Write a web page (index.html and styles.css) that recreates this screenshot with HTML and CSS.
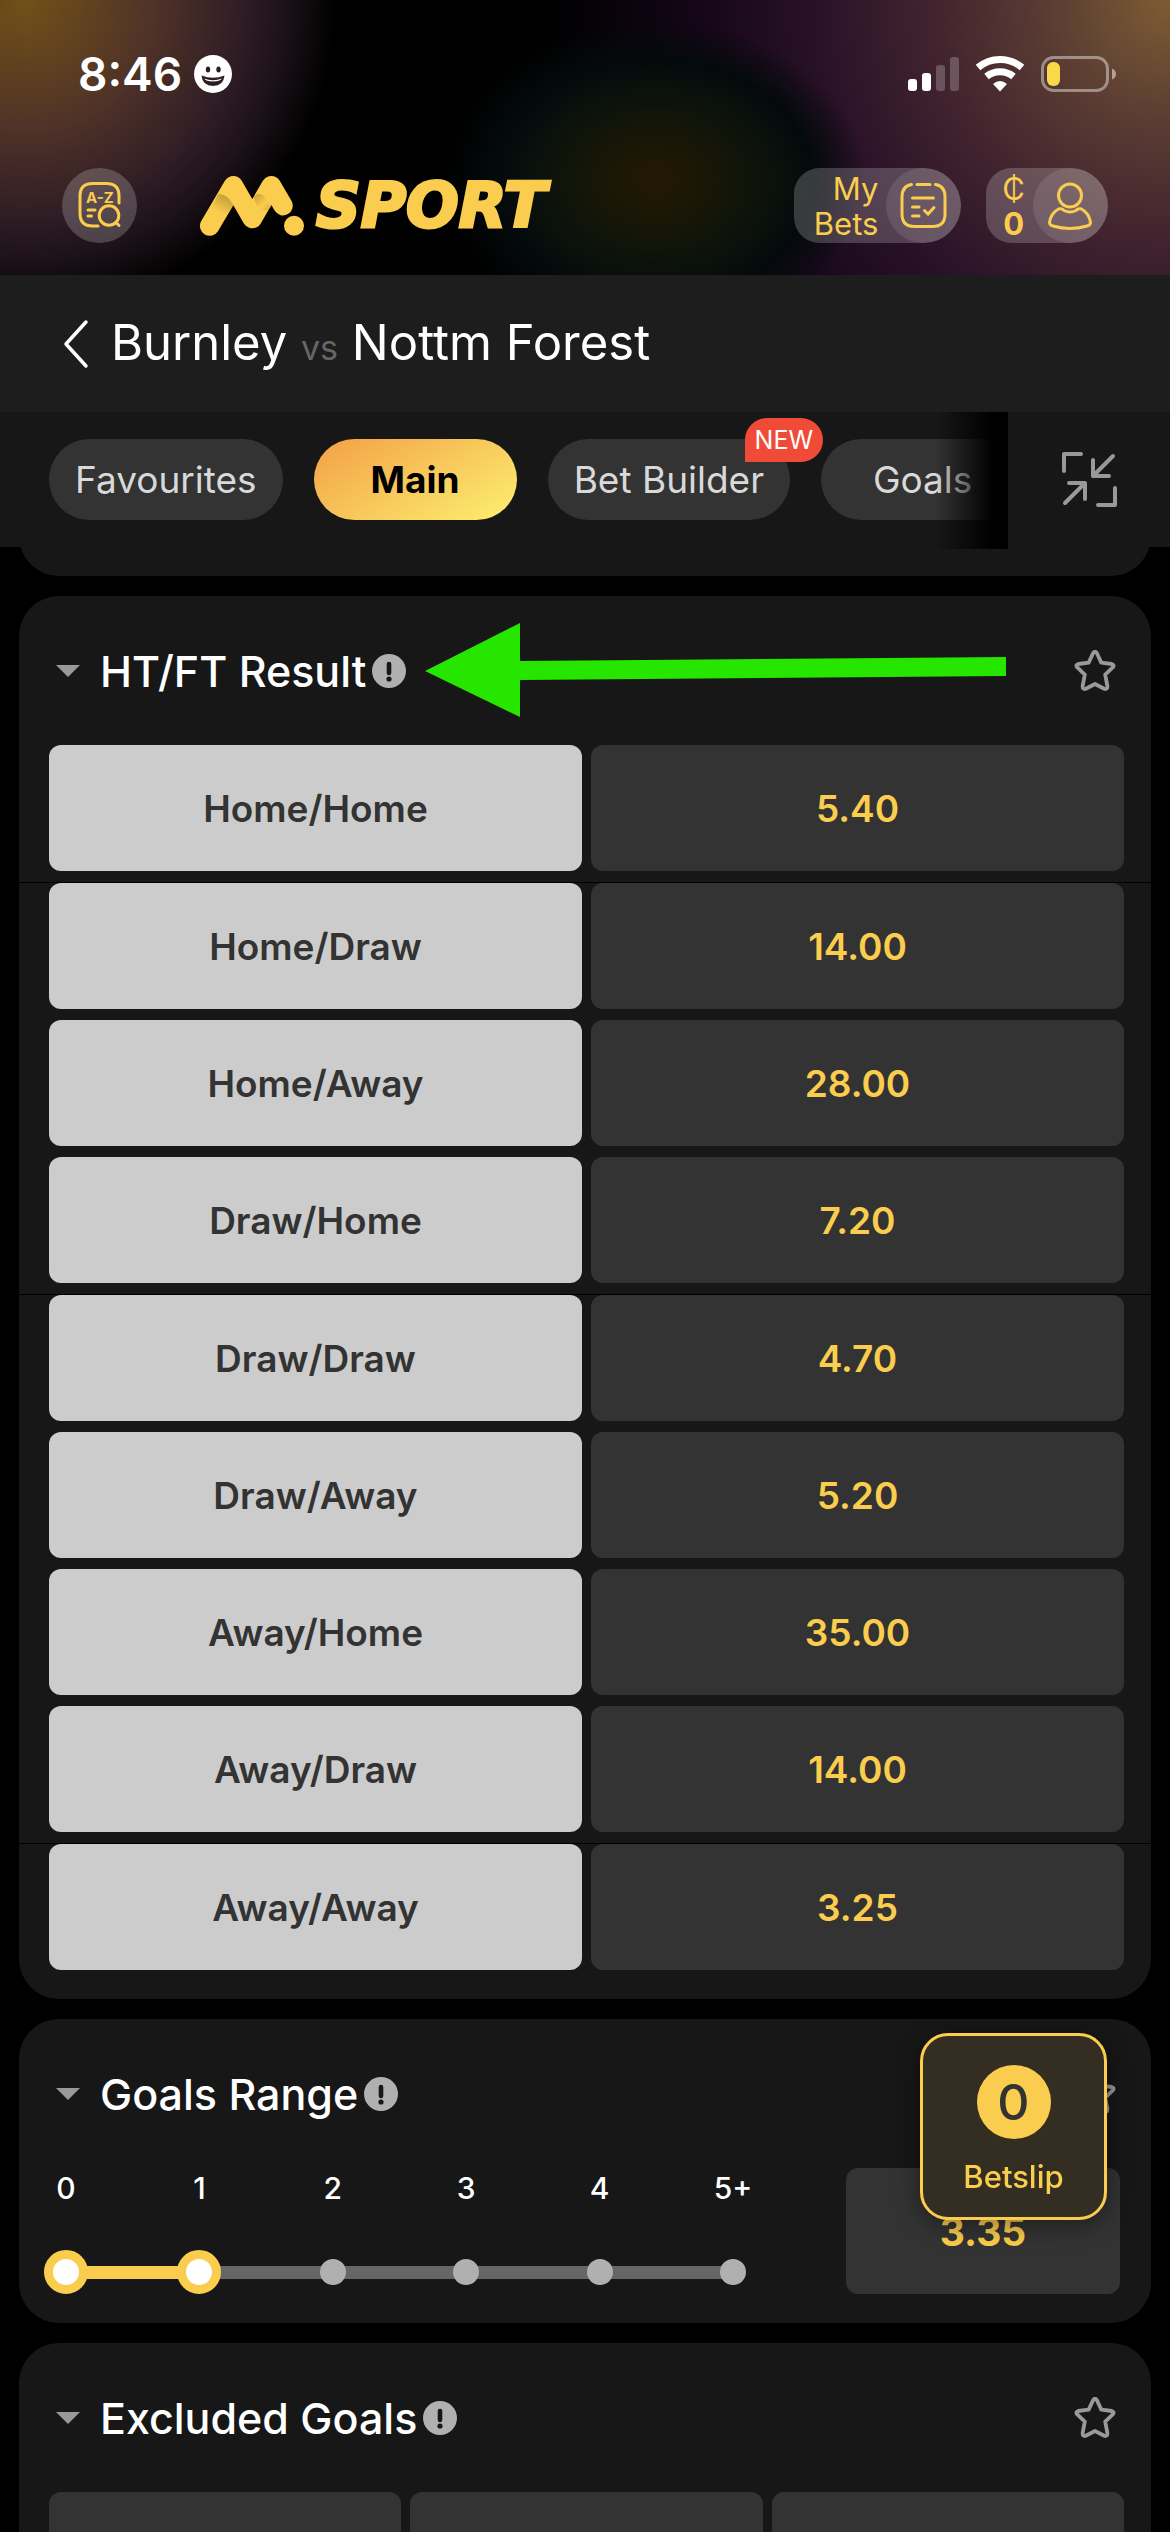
FILE: index.html
```html
<!DOCTYPE html>
<html lang="en">
<head>
    <meta charset="UTF-8">
    <meta name="viewport" content="width=device-width, initial-scale=1.0">
    <title>Burnley vs Nottm Forest</title>
    <link rel="stylesheet" href="styles.css">
</head>
<body>
    <!-- shared icons -->
    <svg class="sprite" width="0" height="0" aria-hidden="true">
        <symbol id="star" viewBox="0 0 42 42">
            <path d="M19.3 2.8Q21 .4 22.7 2.8L27.3 12.6 37.8 14Q40.6 14.8 39 17.2L31.2 24.6 33.4 36.2Q33.4 39.8 30.2 38.8L21 34 11.8 38.8Q8.6 39.8 8.6 36.2L10.8 24.6 3 17.2Q1.4 14.8 4.2 14L14.7 12.6Z" fill="none" stroke="#999" stroke-width="3.8" stroke-linejoin="round"/>
        </symbol>
        <symbol id="info" viewBox="0 0 34 34">
            <circle cx="17" cy="17" r="17" fill="#b0b0b0"/>
            <path d="M17 10V19" stroke="#171717" stroke-width="4.6" stroke-linecap="round"/>
            <circle cx="17" cy="25" r="2.6" fill="#171717"/>
        </symbol>
        <symbol id="caret" viewBox="0 0 24 12">
            <path d="M0 0H24L12 12Z" fill="#999"/>
        </symbol>
    </svg>

    <div class="app">
        <header class="top">
            <div class="status">
                <div class="clock">
                    <span>8:46</span>
                    <svg width="38" height="38" viewBox="0 0 38 38" aria-hidden="true">
                        <circle cx="19" cy="19" r="19" fill="#fff"/>
                        <ellipse cx="14" cy="14.5" rx="2.2" ry="3" fill="#2d1d20"/>
                        <ellipse cx="24.5" cy="14.5" rx="2.2" ry="3" fill="#2d1d20"/>
                        <path d="M7.5 20.5Q19 25 30.5 20.5Q29.5 31 19 31Q8.5 31 7.5 20.5Z" fill="#2d1d20"/>
                        <path d="M10 23.5Q19 27 28 23.5Q26 26.5 19 26.5Q12 26.5 10 23.5Z" fill="#fff"/>
                    </svg>
                </div>
                <svg width="210" height="38" viewBox="0 0 210 38" aria-hidden="true">
                    <rect x="2" y="24" width="9" height="12" rx="3" fill="#fff"/>
                    <rect x="16" y="18" width="9" height="18" rx="3" fill="#fff"/>
                    <rect x="30" y="10" width="9" height="26" rx="3" fill="#fff" opacity=".22"/>
                    <rect x="44" y="2" width="9" height="34" rx="3" fill="#fff" opacity=".22"/>
                    <path d="M72 12.5A34 34 0 0 1 116 12.5" fill="none" stroke="#fff" stroke-width="7"/>
                    <path d="M80.5 21.5A21.5 21.5 0 0 1 107.5 21.5" fill="none" stroke="#fff" stroke-width="7"/>
                    <path d="M87 29Q94 23 101 29L94 36.5Z" fill="#fff"/>
                    <rect x="136.5" y="2.5" width="65" height="33" rx="11" fill="none" stroke="#fff" stroke-opacity=".42" stroke-width="3"/>
                    <rect x="141" y="7" width="13" height="24" rx="6" fill="#f9d949"/>
                    <path d="M206 13.5Q210 15 210 19T206 24.5Z" fill="#fff" opacity=".5"/>
                </svg>
            </div>

            <div class="nav">
                <button class="round-btn" type="button" aria-label="A-Z search">
                    <svg width="75" height="75" viewBox="0 0 75 75" fill="none" stroke="#fbcd4e" stroke-width="3" stroke-linecap="round">
                        <path d="M57 35V28Q57 15.5 44.5 15.5H30.5Q18 15.5 18 28V45.5Q18 58 30.5 58H36"/>
                        <circle cx="47" cy="47.5" r="9.8"/>
                        <path d="M54 54.5L57 57.5M26 42H33M26 48H29.5"/>
                        <text class="az" x="24" y="35" fill="#fbcd4e" stroke="none">A-Z</text>
                    </svg>
                </button>
                <a class="logo" href="#">
                    <svg width="105" height="62" viewBox="0 0 105 62" aria-hidden="true">
                        <defs>
                            <linearGradient id="foldLeft" x1="30" y1="19" x2="17" y2="42" gradientUnits="userSpaceOnUse">
                                <stop offset="0" stop-color="#b89433"/>
                                <stop offset=".8" stop-color="#fbcd4e"/>
                            </linearGradient>
                            <linearGradient id="foldRight" x1="57" y1="20" x2="70" y2="34" gradientUnits="userSpaceOnUse">
                                <stop offset="0" stop-color="#cfa73d"/>
                                <stop offset=".6" stop-color="#fbcd4e"/>
                                <stop offset="1" stop-color="#d9af43"/>
                            </linearGradient>
                        </defs>
                        <path d="M9.7 51L33.3 10.7 52.3 43.5 71.3 10.7 83 30.7" fill="none" stroke="#fbcd4e" stroke-width="19.5" stroke-linecap="round" stroke-linejoin="round"/>
                        <path d="M18 19.3Q27 18 33.3 30L24 45 10 36Z" fill="url(#foldLeft)"/>
                        <path d="M54 22Q58 16 64 21L71 31Q68 37 61 34Q55 30 54 22Z" fill="url(#foldRight)"/>
                        <circle cx="94" cy="50.7" r="10" fill="#fbcd4e"/>
                    </svg>
                    <span class="logo-text">SPORT</span>
                </a>
                <button class="pill bets" type="button">
                    <span class="pill-text">My<br>Bets</span>
                    <svg class="pill-icon" width="75" height="75" viewBox="0 0 75 75" fill="none" stroke="#fbcd4e" stroke-width="3" stroke-linecap="round" aria-hidden="true">
                        <path d="M25.5 16.5Q16 18 16 29V46Q16 58.5 28.5 58.5H46.5Q59 58.5 59 46V29Q59 18 49.5 16.5M31 16.5H44"/>
                        <path d="M26.5 30H47.5M26.5 39H33M26.5 48H33M38.5 42.5L42 46 48 39.5"/>
                    </svg>
                </button>
                <button class="pill account" type="button" aria-label="Account, balance 0">
                    <span class="pill-text">₵<br><b>0</b></span>
                    <svg class="pill-icon" width="75" height="75" viewBox="0 0 75 75" fill="none" stroke="#fbcd4e" stroke-width="3" stroke-linejoin="round" aria-hidden="true">
                        <circle cx="37" cy="27.5" r="11.5"/>
                        <path d="M25.5 41Q29 40 31 42.5Q37 45.5 43 42.5Q45 40 48.5 41Q56 45 57.5 54.5Q57.5 57 54 58Q37 63 20 58Q16.5 57 16.5 54.5Q18 45 25.5 41Z"/>
                    </svg>
                </button>
            </div>
        </header>

        <div class="match">
            <a class="back" href="#" aria-label="Back">
                <svg width="26" height="54" viewBox="0 0 26 54" fill="none" stroke="#fff" stroke-width="3.5" stroke-linecap="round" stroke-linejoin="round">
                    <path d="M23 5L3 27 23 49"/>
                </svg>
            </a>
            <h1>Burnley <small>vs</small> Nottm Forest</h1>
        </div>

        <nav class="tabs">
            <div class="tab-list">
                <button class="tab" type="button">Favourites</button>
                <button class="tab active" type="button">Main</button>
                <button class="tab" type="button">Bet Builder<span class="badge">NEW</span></button>
                <button class="tab" type="button">Goals</button>
            </div>
            <button class="collapse" type="button" aria-label="Collapse all">
                <svg width="56" height="56" viewBox="0 0 56 56" fill="none" stroke="#999" stroke-width="4" stroke-linecap="round" stroke-linejoin="round">
                    <path d="M3 19V2H20M37 53H54V36"/>
                    <path d="M52 4L32 24M32 8V24H48"/>
                    <path d="M4 51L24 31M8 31H24V47"/>
                </svg>
            </button>
        </nav>

        <main>
            <div class="card-stub"></div>

            <section class="card">
                <div class="card-head">
                    <svg class="caret" aria-hidden="true"><use href="#caret"/></svg>
                    <h2>HT/FT Result</h2>
                    <svg class="info" aria-hidden="true"><use href="#info"/></svg>
                    <button class="fav" type="button" aria-label="Add HT/FT Result to favourites"><svg><use href="#star"/></svg></button>
                    <svg class="arrow" width="582" height="94" viewBox="0 0 582 94" aria-hidden="true">
                        <path d="M0 48L95 0V38L581 34V53L95 57V94Z" fill="#26e600"/>
                    </svg>
                </div>
                <div class="group">
                    <div class="row"><span class="outcome">Home/Home</span><button class="odds" type="button">5.40</button></div>
                </div>
                <div class="group">
                    <div class="row"><span class="outcome">Home/Draw</span><button class="odds" type="button">14.00</button></div>
                    <div class="row"><span class="outcome">Home/Away</span><button class="odds" type="button">28.00</button></div>
                    <div class="row"><span class="outcome">Draw/Home</span><button class="odds" type="button">7.20</button></div>
                </div>
                <div class="group">
                    <div class="row"><span class="outcome">Draw/Draw</span><button class="odds" type="button">4.70</button></div>
                    <div class="row"><span class="outcome">Draw/Away</span><button class="odds" type="button">5.20</button></div>
                    <div class="row"><span class="outcome">Away/Home</span><button class="odds" type="button">35.00</button></div>
                    <div class="row"><span class="outcome">Away/Draw</span><button class="odds" type="button">14.00</button></div>
                </div>
                <div class="group">
                    <div class="row"><span class="outcome">Away/Away</span><button class="odds" type="button">3.25</button></div>
                </div>
            </section>

            <section class="card">
                <div class="card-head">
                    <svg class="caret" aria-hidden="true"><use href="#caret"/></svg>
                    <h2>Goals Range</h2>
                    <svg class="info" aria-hidden="true"><use href="#info"/></svg>
                    <button class="fav" type="button" aria-label="Add Goals Range to favourites"><svg><use href="#star"/></svg></button>
                </div>
                <div class="goals-range">
                    <div class="range">
                        <div class="range-labels">
                            <span>0</span><span>1</span><span>2</span><span>3</span><span>4</span><span>5+</span>
                        </div>
                        <div class="range-slider">
                            <div class="track"><div class="fill" style="width: 20%"></div></div>
                            <div class="dots"><i></i><i></i><i></i><i></i><i></i><i></i></div>
                            <input type="range" min="0" max="5" value="0" aria-label="Minimum goals">
                            <input type="range" min="0" max="5" value="1" aria-label="Maximum goals">
                        </div>
                    </div>
                    <button class="odds range-odds" type="button">3.35</button>
                </div>
            </section>

            <section class="card">
                <div class="card-head">
                    <svg class="caret" aria-hidden="true"><use href="#caret"/></svg>
                    <h2>Excluded Goals</h2>
                    <svg class="info" aria-hidden="true"><use href="#info"/></svg>
                    <button class="fav" type="button" aria-label="Add Excluded Goals to favourites"><svg><use href="#star"/></svg></button>
                </div>
                <div class="three">
                    <button class="odds" type="button" aria-label="Option 1"></button>
                    <button class="odds" type="button" aria-label="Option 2"></button>
                    <button class="odds" type="button" aria-label="Option 3"></button>
                </div>
            </section>
        </main>

        <button class="betslip" type="button">
            <span class="count">0</span>
            <span>Betslip</span>
        </button>
    </div>
</body>
</html>
```

FILE: styles.css
```css
* {
    margin: 0;
    padding: 0;
    box-sizing: border-box;
}

body {
    font-family: Inter, "Liberation Sans", sans-serif;
    background: #000;
    color: #fff;
}

button {
    border: none;
    background: none;
    color: inherit;
    font: inherit;
    cursor: pointer;
}

a {
    color: inherit;
    text-decoration: none;
}

svg {
    display: block;
    flex-shrink: 0;
}

.sprite {
    position: absolute;
}

.app {
    height: 100vh;
    overflow: hidden;
}

/* header */
.top {
    padding: 54px 54px 32px 62px;
    background:
        radial-gradient(circle at 25px 0, #6f5118 0, #5f4020 70px, #4f3228 130px, #301d25 215px, #1c1218 260px, transparent 312px),
        radial-gradient(ellipse 210px 160px at 56% 180px, #241803 0, #191706 25%, #0d130b 50%, #040a0c 75%, transparent 100%),
        radial-gradient(circle at 100% 0, #7d5c32 0, #5b3d33 120px, #43252f 230px, #2a1228 350px, #150618 470px, transparent 620px);
}

.status {
    display: flex;
    justify-content: space-between;
    align-items: center;
    height: 40px;
}

.clock {
    display: flex;
    align-items: center;
    gap: 12px;
    padding-left: 16px;
    font-size: 46px;
    line-height: 40px;
    font-weight: 600;
}

.nav {
    display: flex;
    align-items: center;
    height: 75px;
    margin-top: 74px;
    padding-right: 8px;
}

.round-btn {
    height: 75px;
    border-radius: 50%;
    background: rgba(255, 255, 255, 0.2);
}

.az {
    font: 700 15px Inter, sans-serif;
}

.logo {
    display: flex;
    align-items: center;
    gap: 11px;
    margin-left: 63px;
    margin-right: auto;
    color: #fbcd4e;
}

.logo-text {
    font-family: "DejaVu Sans", sans-serif;
    font-size: 62px;
    line-height: 62px;
    font-weight: 700;
    font-style: italic;
    -webkit-text-stroke: 3px #fbcd4e;
}

.pill {
    display: flex;
    align-items: center;
    gap: 8px;
    border-radius: 26px 38px 38px 26px;
    background: rgba(255, 255, 255, 0.2);
    color: #fbcd4e;
    font-size: 31px;
    line-height: 35px;
}

.pill-icon {
    border-radius: 50%;
    background: rgba(255, 255, 255, 0.1);
}

.bets {
    padding-left: 20px;
    text-align: right;
}

.account {
    margin-left: 25px;
    padding-left: 16px;
}

/* match title */
.match {
    display: flex;
    align-items: center;
    gap: 22px;
    height: 137px;
    padding-left: 63px;
    background: #1d1d1d;
}

h1 {
    padding-top: 4px;
    font-size: 49px;
    line-height: 60px;
    font-weight: 400;
}

h1 small {
    font-size: 34px;
    color: #666;
}

/* tabs */
.tabs {
    position: relative;
    z-index: 1;
    display: flex;
    height: 135px;
    background: #171717;
}

.tab-list {
    display: flex;
    align-items: center;
    gap: 31px;
    flex: 1;
    min-width: 0;
    padding-left: 49px;
    overflow: hidden;
}

/* fade over the cut-off tab */
.tabs::after {
    content: "";
    position: absolute;
    top: 0;
    right: 162px;
    width: 72px;
    height: 137px;
    background: linear-gradient(to right, transparent, #000 80%);
}

.tab {
    position: relative;
    flex-shrink: 0;
    min-width: 203px;
    height: 81px;
    padding: 0 26px;
    border-radius: 41px;
    background: #333;
    color: #d9d9d9;
    font-size: 37px;
}

.tab.active {
    background: linear-gradient(150deg, #f4a84a 10%, #fcec6e 95%);
    color: #000;
    font-weight: 700;
}

.badge {
    position: absolute;
    top: -21px;
    right: -33px;
    padding: 0 10px;
    border-radius: 22px 22px 22px 0;
    background: #f04b37;
    color: #fff;
    font-size: 25px;
    line-height: 44px;
}

.collapse {
    display: flex;
    align-items: center;
    justify-content: center;
    width: 162px;
}

/* market cards */
.card-stub {
    height: 69px;
    margin: -40px 19px 20px;
    border-radius: 0 0 40px 40px;
    background: #171717;
}

.card {
    margin: 0 19px 20px;
    padding-bottom: 29px;
    border-radius: 40px;
    background: #171717;
}

.card-head {
    position: relative;
    display: flex;
    align-items: center;
    height: 149px;
    padding: 0 35px 0 37px;
}

.caret {
    width: 24px;
    height: 12px;
}

h2 {
    margin-left: 20px;
    margin-right: 6px;
    font-size: 43px;
    line-height: 52px;
    font-weight: 500;
}

.info {
    width: 34px;
    height: 34px;
}

.fav {
    margin-left: auto;
}

.fav svg {
    width: 42px;
    height: 42px;
}

.arrow {
    position: absolute;
    top: 27px;
    left: 406px;
}

.group {
    display: grid;
    gap: 11px;
    padding: 0 27px 0 30px;
}

.group + .group {
    margin-top: 11px;
    border-top: 1px solid #000;
}

.row {
    display: grid;
    grid-template-columns: 1fr 1fr;
    gap: 9px;
}

.outcome,
.odds {
    display: flex;
    align-items: center;
    justify-content: center;
    height: 126px;
    border-radius: 12px;
    font-size: 37px;
    font-weight: 600;
}

.outcome {
    background: #ccc;
    color: #333;
}

.odds {
    background: #333;
    color: #fbcd4e;
}

/* goals range */
.goals-range {
    display: flex;
    gap: 91px;
    padding: 0 31px 0 25px;
}

.range {
    display: flex;
    flex: 1;
    flex-direction: column;
    justify-content: space-between;
}

.range-labels,
.dots {
    display: flex;
    justify-content: space-between;
}

.range-labels span {
    width: 44px;
    text-align: center;
    font-size: 30px;
    line-height: 40px;
    font-weight: 500;
}

.range-slider {
    display: grid;
    align-items: center;
}

.range-slider > * {
    grid-area: 1 / 1;
}

.track {
    height: 13px;
    margin: 0 22px;
    background: #666;
}

.fill {
    height: 100%;
    background: #fbcd4e;
}

.dots {
    padding: 0 9px;
}

.dots i {
    width: 26px;
    height: 26px;
    border-radius: 50%;
    background: #b0b0b0;
}

input[type="range"] {
    -webkit-appearance: none;
    appearance: none;
    width: 100%;
    height: 44px;
    background: none;
    pointer-events: none;
}

input[type="range"]::-webkit-slider-thumb {
    -webkit-appearance: none;
    width: 44px;
    height: 44px;
    border: 9px solid #fbcd4e;
    border-radius: 50%;
    background: #fff;
    pointer-events: auto;
}

.range-odds {
    width: 274px;
    font-size: 39px;
    font-weight: 700;
}

.three {
    display: grid;
    grid-template-columns: repeat(3, 1fr);
    gap: 9px;
    padding: 0 27px 0 30px;
}

/* floating betslip */
.betslip {
    position: fixed;
    right: 63px;
    bottom: 312px;
    z-index: 2;
    display: flex;
    flex-direction: column;
    align-items: center;
    justify-content: center;
    gap: 18px;
    width: 187px;
    height: 187px;
    padding-top: 8px;
    border: 3px solid #fbcd4e;
    border-radius: 28px;
    background: #332e21;
    box-shadow: 0 4px 26px rgba(0, 0, 0, 0.45);
    color: #fbcd4e;
    font-size: 31px;
    line-height: 40px;
    font-weight: 500;
}

.count {
    width: 74px;
    border-radius: 50%;
    background: #fbcd4e;
    color: #333;
    font-size: 50px;
    line-height: 74px;
}
```
